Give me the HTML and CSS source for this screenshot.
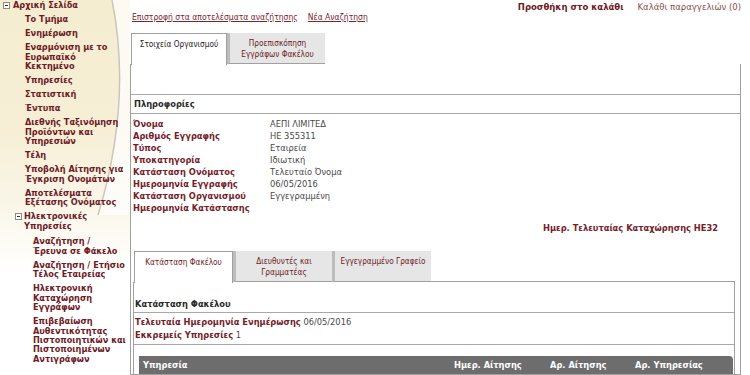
FILE: index.html
```html
<!DOCTYPE html>
<html lang="el">
  <head>
    <meta charset="UTF-8" />
    <title>Στοιχεία Οργανισμού</title>
    <link rel="stylesheet" href="styles.css" />
  </head>
  <body>
    <div class="page">
      <nav class="sidebar">
        <svg class="swoosh" width="130" height="375" viewBox="0 0 130 375">
          <path d="M112 0 C124 60 124 130 98 215 L130 215 L130 0 Z" fill="#ffffff" opacity="0.7" />
          <path d="M112 0 C124 60 124 130 98 215" fill="none" stroke="#c9c6bd" stroke-width="1.5" />
        </svg>
        <ul class="menu">
          <li class="menu-root"><span class="toggle"></span>Αρχική Σελίδα</li>
          <li>Το Τμήμα</li>
          <li>Ενημέρωση</li>
          <li>Εναρμόνιση με το<br />Ευρωπαϊκό<br />Κεκτημένο</li>
          <li>Υπηρεσίες</li>
          <li>Στατιστική</li>
          <li>Έντυπα</li>
          <li>Διεθνής Ταξινόμηση<br />Προϊόντων και<br />Υπηρεσιών</li>
          <li>Τέλη</li>
          <li>Υποβολή Αίτησης για<br />Έγκριση Ονομάτων</li>
          <li>Αποτελέσματα<br />Εξέτασης Ονόματος</li>
          <li class="menu-group"><span class="toggle"></span>Ηλεκτρονικές<br />Υπηρεσίες</li>
          <li class="menu-sub">Αναζήτηση /<br />Έρευνα σε Φάκελο</li>
          <li class="menu-sub">Αναζήτηση / Ετήσιο<br />Τέλος Εταιρείας</li>
          <li class="menu-sub">Ηλεκτρονική<br />Καταχώρηση<br />Εγγράφων</li>
          <li class="menu-sub">Επιβεβαίωση<br />Αυθεντικότητας<br />Πιστοποιητικών και<br />Πιστοποιημένων<br />Αντιγράφων</li>
        </ul>
      </nav>

      <main class="content">
        <div class="cart">
          <a class="cart-add" href="#">Προσθήκη στο καλάθι</a>
          <a class="cart-view" href="#">Καλάθι παραγγελιών (0)</a>
        </div>
        <div class="back-links">
          <a href="#">Επιστροφή στα αποτελέσματα αναζήτησης</a>
          <a href="#">Νέα Αναζήτηση</a>
        </div>

        <div class="tabs">
          <div class="tab active">Στοιχεία Οργανισμού</div>
          <div class="tab">Προεπισκόπηση<br />Εγγράφων Φακέλου</div>
        </div>

        <div class="panel">
          <div class="section-title">Πληροφορίες</div>
          <div class="details">
            <span class="label">Όνομα</span><span class="value">ΑΕΠΙ ΛΙΜΙΤΕΔ</span>
            <span class="label">Αριθμός Εγγραφής</span><span class="value">ΗΕ 355311</span>
            <span class="label">Τύπος</span><span class="value">Εταιρεία</span>
            <span class="label">Υποκατηγορία</span><span class="value">Ιδιωτική</span>
            <span class="label">Κατάσταση Ονόματος</span><span class="value">Τελευταίο Όνομα</span>
            <span class="label">Ημερομηνία Εγγραφής</span><span class="value">06/05/2016</span>
            <span class="label">Κατάσταση Οργανισμού</span><span class="value">Εγγεγραμμένη</span>
            <span class="label">Ημερομηνία Κατάστασης</span><span class="value"></span>
          </div>
          <div class="last-entry">Ημερ. Τελευταίας Καταχώρησης ΗΕ32</div>

          <div class="inner">
            <div class="tabs inner-tabs">
              <div class="tab active">Κατάσταση Φακέλου</div>
              <div class="tab">Διευθυντές και<br />Γραμματέας</div>
              <div class="tab">Εγγεγραμμένο Γραφείο</div>
            </div>
            <div class="inner-panel">
              <div class="inner-title">Κατάσταση Φακέλου</div>
              <div class="status">
                <div><span class="label">Τελευταία Ημερομηνία Ενημέρωσης</span> <span class="value">06/05/2016</span></div>
                <div><span class="label">Εκκρεμείς Υπηρεσίες</span> <span class="value">1</span></div>
              </div>
              <div class="table-head">
                <span>Υπηρεσία</span>
                <span>Ημερ. Αίτησης</span>
                <span>Αρ. Αίτησης</span>
                <span>Αρ. Υπηρεσίας</span>
              </div>
            </div>
          </div>
        </div>
      </main>
    </div>
  </body>
</html>
```

FILE: styles.css
```css
/* Base */
* {
  margin: 0;
  padding: 0;
  box-sizing: border-box;
}

body {
  font-family: "DejaVu Sans", Verdana, sans-serif;
  font-size: 8.3px;
  color: #4a4a4a;
  background: #ffffff;
  overflow: hidden;
}

a {
  text-decoration: none;
}

.page {
  display: flex;
  height: 375px;
  overflow: hidden;
}

/* Sidebar */
.sidebar {
  position: relative;
  width: 130px;
  flex-shrink: 0;
  background: linear-gradient(180deg, #f5edd0 0%, #f6efd6 35%, #faf6e8 55%, #ffffff 72%);
}

.swoosh {
  position: absolute;
  top: 0;
  left: 0;
}

.menu {
  position: relative;
  list-style: none;
  padding-top: 1px;
  font-weight: bold;
  font-size: 8.2px;
  color: #6e1a26;
  line-height: 9.4px;
  white-space: nowrap;
}

.menu li {
  padding-left: 25px;
  margin-bottom: 4.7px;
}

.menu .menu-root {
  padding-left: 13px;
  position: relative;
}

.menu .menu-group {
  padding-left: 24px;
  position: relative;
  margin-bottom: 6px;
}

.menu .menu-sub {
  padding-left: 33px;
}

.toggle {
  position: absolute;
  top: 1px;
  width: 7px;
  height: 7px;
  border: 1px solid #8a8a8a;
  background: #fff;
}

.menu-root .toggle {
  left: 3px;
}

.menu-group .toggle {
  left: 15px;
}

.toggle::after {
  content: "";
  position: absolute;
  left: 1px;
  right: 1px;
  top: 2px;
  height: 1px;
  background: #333;
}

/* Content */
.content {
  width: 611px;
}

.cart {
  display: flex;
  justify-content: flex-end;
  gap: 14px;
  height: 12px;
  padding-top: 2px;
  line-height: 10px;
  font-size: 8.5px;
}

.cart-add {
  font-weight: bold;
  color: #6e1a26;
}

.cart-view {
  color: #8a4f4f;
}

.back-links {
  display: flex;
  gap: 10px;
  padding-left: 2px;
  line-height: 10px;
  height: 21px;
  font-size: 8.5px;
  font-family: "DejaVu Sans Condensed", "DejaVu Sans", sans-serif;
}

.back-links a {
  color: #7a2630;
  text-decoration: underline;
}

/* Tabs */
.tabs {
  display: flex;
  padding-left: 1px;
  height: 31px;
  font-family: "DejaVu Sans Condensed", "DejaVu Sans", sans-serif;
  font-size: 8.2px;
  position: relative;
}

.tab {
  width: 98px;
  text-align: center;
  line-height: 11px;
  padding-top: 5px;
  color: #6e1a26;
  background: #e6e6e6;
  border-left: 3px solid #bcbcbc;
  border-bottom: 1px solid #a0a0a0;
}

.tabs > .tab:first-child {
  width: 96px;
}

.tab.active {
  background: #ffffff;
  border: 1px solid #a0a0a0;
  border-bottom: none;
  color: #2a1a1a;
  position: relative;
  z-index: 1;
  height: 32px;
}

.panel {
  border: 1px solid #a0a0a0;
  border-top: none;
  padding-top: 30px;
  height: 311px;
}

.section-title {
  border-top: 1px solid #a8a8a8;
  border-bottom: 1px solid #a8a8a8;
  height: 20px;
  line-height: 18px;
  padding-left: 3px;
  font-weight: bold;
  color: #2a2a2a;
}

.details {
  display: grid;
  grid-template-columns: 137px 1fr;
  padding: 4px 0 0 2px;
  line-height: 12px;
}

.label {
  font-weight: bold;
  color: #761d2b;
}

.value {
  color: #4a4a4a;
}

.last-entry {
  margin-top: 8px;
  text-align: right;
  padding-right: 22px;
  line-height: 12px;
  font-weight: bold;
  color: #761d2b;
}

/* Inner tabs */
.inner {
  margin: 17px 5px 0 2px;
}

.inner-tabs .tab {
  width: 99px;
}

.inner-tabs > .tab:first-child {
  width: 99px;
}

.inner-tabs .tab.active {
  color: #6e1a26;
}

.inner-panel {
  border-left: 1px solid #a0a0a0;
  border-right: 1px solid #a0a0a0;
  height: 100px;
}

.inner-tabs::after {
  content: "";
  flex: 1;
  border-bottom: 1px solid #a0a0a0;
}

.inner-title {
  padding: 16px 0 2px 1px;
  line-height: 12px;
  font-weight: bold;
  color: #2a2a2a;
  border-bottom: 1px solid #a8a8a8;
}

.status {
  padding: 3px 0 2px 1px;
  line-height: 13px;
  border-bottom: 1px solid #a8a8a8;
}

.table-head {
  display: grid;
  grid-template-columns: 315px 96px 85px 1fr;
  margin: 11px 1px 0 5px;
  height: 18px;
  line-height: 18px;
  background: #6d6d6d;
  border-radius: 0 4px 0 0;
  color: #ffffff;
  font-weight: bold;
}

.table-head span:first-child {
  padding-left: 4px;
}
```
